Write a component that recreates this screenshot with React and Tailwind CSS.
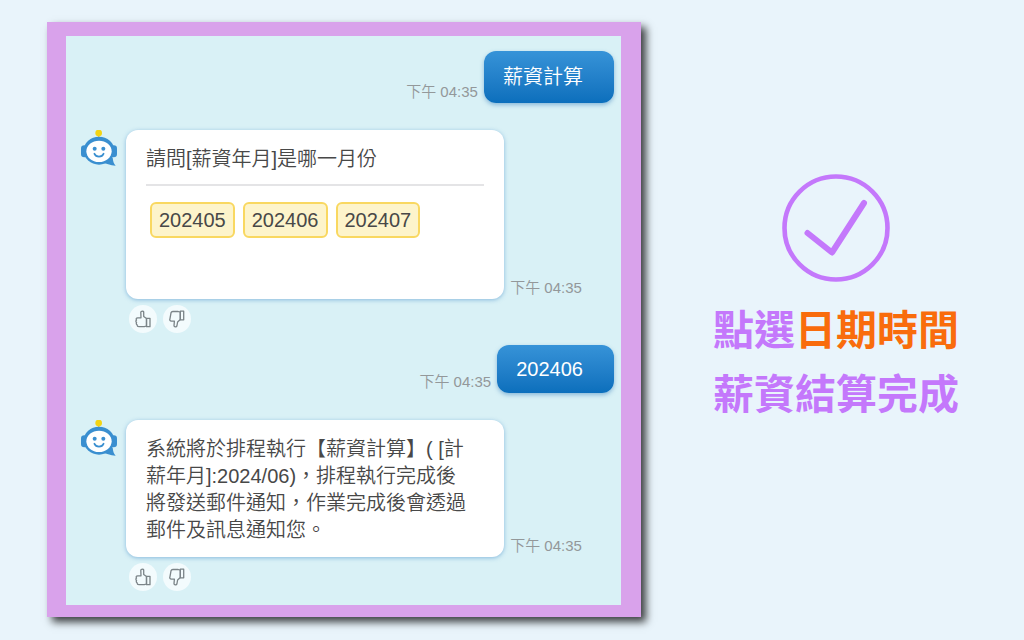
import React from "react";

const months = ["202405", "202406", "202407"];

const BotAvatar = () => (
  <svg viewBox="0 0 108 108" className="size-9 shrink-0" aria-hidden="true">
    <path d="M53 12v14" stroke="#e8cf3a" strokeWidth="5" />
    <circle cx="53" cy="9" r="10" fill="#f3d413" />
    <rect x="0" y="46" width="20" height="36" rx="10" fill="#3a8fd0" />
    <rect x="88" y="46" width="20" height="36" rx="10" fill="#3a8fd0" />
    <ellipse cx="54" cy="62" rx="46" ry="42" fill="#3a8fd0" />
    <path d="M62 98c12 0 26 8 42 9-6-7-8-14-9-24L78 80z" fill="#3a8fd0" />
    <ellipse cx="54" cy="64" rx="38" ry="32" fill="#fff" />
    <circle cx="41" cy="56" r="6" fill="#3a8fd0" />
    <circle cx="67" cy="56" r="6" fill="#3a8fd0" />
    <path
      d="M40 71c5 12 23 12 28 0"
      fill="none"
      stroke="#3a8fd0"
      strokeWidth="5"
      strokeLinecap="round"
    />
  </svg>
);

const ThumbUp = () => (
  <svg
    viewBox="0 0 18 18"
    className="size-[18px]"
    fill="none"
    stroke="#7b8488"
    strokeWidth="1.3"
    strokeLinejoin="round"
    aria-hidden="true"
  >
    <path d="M12.5 8.5 9.7 6.4V2.2C9.7 .7 7 .7 6.8 2.2L7 7.8H3.7C2.2 7.9 1.8 9 2.5 10c-.9.8-.7 1.9.1 2.5-.6.9-.3 1.9.5 2.4 0 1.2.7 1.8 1.8 1.8h5.4l2.2-.7z" />
    <path d="M12.5 8.3H16v8.4h-3.5z" />
  </svg>
);

const ThumbDown = () => (
  <svg
    viewBox="0 0 18 18"
    className="size-[18px]"
    fill="none"
    stroke="#7b8488"
    strokeWidth="1.3"
    strokeLinejoin="round"
    aria-hidden="true"
  >
    <path d="M12.3 9.5 9.6 12l-.7 4c-.5 1.3-2.8 1-2.9-.4l.4-4.5H3.4c-1.4 0-2-1-1.5-2L3 2.8c.3-.9.9-1.3 1.8-1.3h5.4l2.1.6z" />
    <path d="M12.3 1.2h3.4v8.6h-3.4z" />
  </svg>
);

const Time = () => (
  <time
    dateTime="16:35"
    className="shrink-0 text-[15px] leading-[22px] text-[#93989a]"
  >
    下午 04:35
  </time>
);

const UserMessage = ({ children }) => (
  <div className="flex items-end justify-end gap-1.5 pr-[7px]">
    <Time />
    <p className="rounded-xl bg-linear-to-b from-[#3693d8] to-[#0b6fbc] py-2.5 pr-[31px] pl-[19px] text-xl text-white shadow-[0_2px_4px_rgba(60,130,190,0.5)]">
      {children}
    </p>
  </div>
);

const BotMessage = ({ children }) => (
  <div className="flex items-start gap-[9px] pr-[39px] pl-[15px]">
    <BotAvatar />
    <div className="min-w-0 flex-1">
      <div className="flex items-end gap-1.5">
        <div className="min-w-0 flex-1 rounded-xl bg-white px-5 text-xl leading-[27px] text-[#484848] shadow-[0_1px_4px_rgba(70,140,200,0.55)]">
          {children}
        </div>
        <Time />
      </div>
      <div className="flex gap-1.5 pt-1.5 pl-[3px]">
        <button
          aria-label="讚"
          className="flex size-7 items-center justify-center rounded-full bg-[#f3fbfd]"
        >
          <ThumbUp />
        </button>
        <button
          aria-label="倒讚"
          className="flex size-7 items-center justify-center rounded-full bg-[#f3fbfd]"
        >
          <ThumbDown />
        </button>
      </div>
    </div>
  </div>
);

const App = () => {
  return (
    <main
      lang="zh-TW"
      className="flex min-h-screen items-start bg-[#e9f4fb] pt-[22px] pl-[47px] font-['Liberation_Sans','Noto_Sans_CJK_TC',sans-serif]"
    >
      <section className="w-[58vw] bg-[#d9a2eb] pt-3.5 pr-5 pb-3 pl-[19px] shadow-[5px_5px_8px_rgba(0,0,0,0.75)]">
        <div className="flex flex-col bg-[#d9f1f6] pt-[15px] pb-3.5 font-[350]">
          <UserMessage>
            <span className="block leading-8">薪資計算</span>
          </UserMessage>

          <div className="pt-[27px]">
            <BotMessage>
              <p className="border-b-2 border-[#e4e4e6] pt-4 pb-[11px]">
                請問[薪資年月]是哪一月份
              </p>
              <div className="flex gap-2 px-1 pt-4 pb-[61px]">
                {months.map((month) => (
                  <button
                    key={month}
                    className="rounded-md border-2 border-[#f9d861] bg-[#fdf4cb] px-[7px] leading-8"
                  >
                    {month}
                  </button>
                ))}
              </div>
            </BotMessage>
          </div>

          <div className="pt-3">
            <UserMessage>202406</UserMessage>
          </div>

          <div className="pt-[27px]">
            <BotMessage>
              <p className="pt-4 pr-2.5 pb-[13px]">
                系統將於排程執行【薪資計算】( [計薪年月]:2024/06)，排程執行完成後將發送郵件通知，作業完成後會透過郵件及訊息通知您。
              </p>
            </BotMessage>
          </div>
        </div>
      </section>

      <section className="flex flex-1 flex-col items-center pt-[152px] pl-[7px] text-[#c478fb]">
        <svg
          viewBox="0 0 108 108"
          className="size-[108px]"
          fill="none"
          stroke="currentColor"
          strokeLinecap="round"
          strokeLinejoin="round"
          aria-hidden="true"
        >
          <circle cx="54" cy="54" r="51.5" strokeWidth="4.6" />
          <path d="M25.5 59 50 78.5 82 29" strokeWidth="6" />
        </svg>
        <h1 className="pt-[17px] text-center text-[41px] leading-[64px] font-bold">
          點選<span className="text-[#f96c0c]">日期時間</span>
          <br />
          薪資結算完成
        </h1>
      </section>
    </main>
  );
};

export default App;
